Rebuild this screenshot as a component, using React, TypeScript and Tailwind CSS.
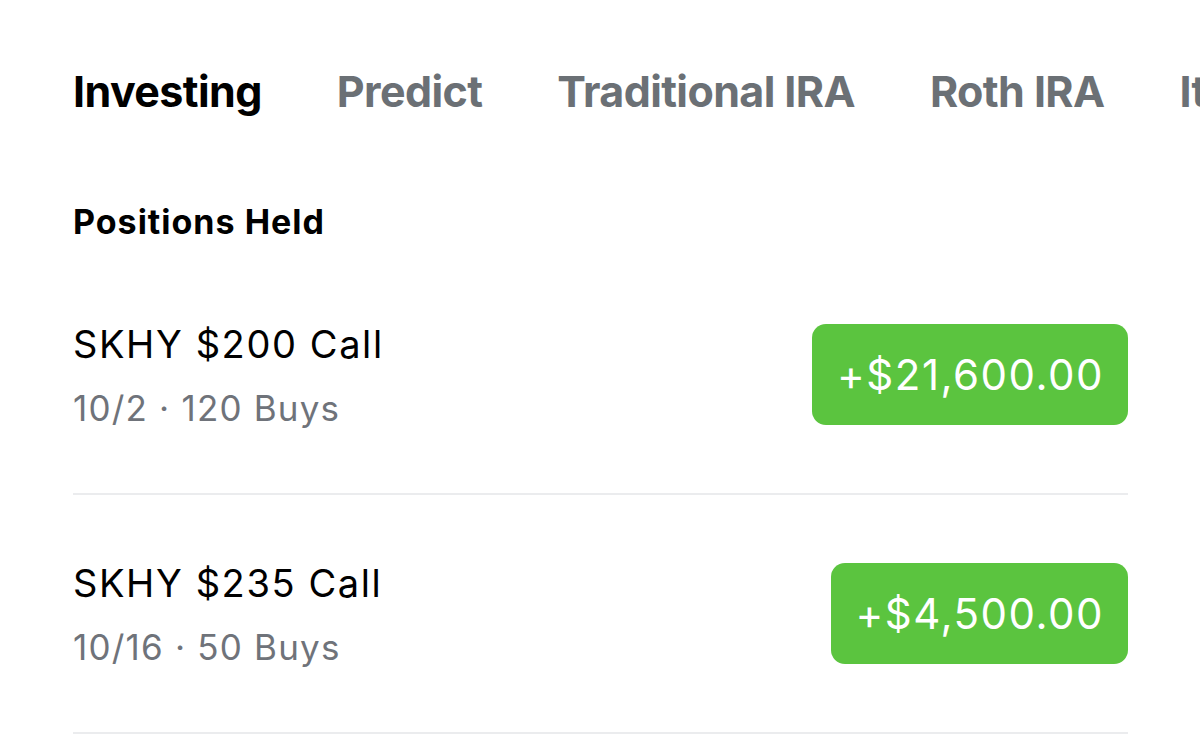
import React from 'react';

const tabs = ['Investing', 'Predict', 'Traditional IRA', 'Roth IRA', 'Items'];

const positions = [
  { name: 'SKHY $200 Call', meta: '10/2 · 120 Buys', gain: '+$21,600.00' },
  { name: 'SKHY $235 Call', meta: '10/16 · 50 Buys', gain: '+$4,500.00' },
];

export default function App() {
  return (
    <div className="w-[1200px] h-[749px] overflow-hidden bg-white font-['Inter',sans-serif] text-black">
      {/* Account tabs */}
      <div className="flex gap-[75px] pl-[73px] pt-[63px] whitespace-nowrap overflow-hidden">
        {tabs.map((tab, i) => (
          <span
            key={tab}
            className={`text-[43px] leading-[56px] font-bold tracking-[-0.6px] ${i === 0 ? 'text-black' : 'text-[#6b7075]'}`}
          >
            {tab}
          </span>
        ))}
      </div>

      <div className="pr-[72px] pl-[73px]">
        <h2 className="mt-[83px] text-[34px] leading-[40px] font-bold tracking-[1px]">Positions Held</h2>

        <div className="mt-[14px]">
          {positions.map((p) => (
            <div key={p.name} className="flex items-center justify-between h-[239px] border-b-2 border-[#ebecee]">
              <div>
                <div className="text-[38px] leading-[44px] tracking-[1.6px]">{p.name}</div>
                <div className="mt-[22px] text-[35px] leading-[40px] text-[#6f737a] tracking-[1.2px]">{p.meta}</div>
              </div>
              <div className="bg-[#5bc43f] rounded-[14px] h-[101px] flex items-center pl-[25px] pr-[24px] text-white text-[42px] tracking-[1.5px]">
                {p.gain}
              </div>
            </div>
          ))}
        </div>
      </div>
    </div>
  );
}
